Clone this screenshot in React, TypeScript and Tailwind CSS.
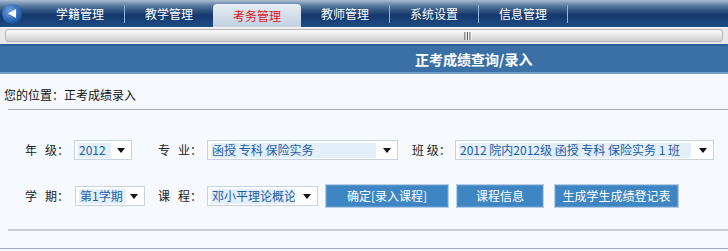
import { ReactNode } from "react";

const tabs = ["学籍管理", "教学管理", "考务管理", "教师管理", "系统设置", "信息管理"];

function Arrow() {
  return (
    <svg width="8" height="5" viewBox="0 0 8 5" className="shrink-0">
      <path d="M0 0h8L4 5z" fill="#111" />
    </svg>
  );
}

function Select({ w, hw, children }: { w: string; hw: string; children: ReactNode }) {
  return (
    <div className={`${w} h-[20px] flex items-center justify-between border border-[#c9d3dd] bg-white pl-[3px] pr-[6px]`}>
      <span className={`${hw} h-[15px] flex items-center bg-[#e3f0fb] px-[1px] text-[#1d5aa6] whitespace-nowrap overflow-hidden`}>
        {children}
      </span>
      <Arrow />
    </div>
  );
}

function Label({ children, w }: { children: ReactNode; w: string }) {
  return <span className={`${w} text-[#222] whitespace-pre`}>{children}</span>;
}

function Btn({ w, children }: { w: string; children: ReactNode }) {
  return (
    <div className={`${w} h-[24px] flex items-center justify-center border border-[#b5cde3] bg-[#3e85c3] text-white shadow-[inset_0_0_0_1px_#5b95c9]`}>
      {children}
    </div>
  );
}

export default function App() {
  return (
    <div
      className="w-[728px] h-[251px] bg-[#f6f9fd] text-[12px] overflow-hidden"
      style={{ fontFamily: '"Noto Sans CJK SC", "DejaVu Sans", sans-serif' }}
    >
      {/* Top navigation */}
      <div className="h-[27px] flex items-end bg-[linear-gradient(#a9bccf_0%,#4d6f98_25%,#14386c_55%,#1e4c85_100%)]">
        <div className="w-[26px] h-full flex items-center pl-[2px]">
          <div className="w-[20px] h-[20px] rounded-full bg-[radial-gradient(circle_at_40%_35%,#6fa3e0,#1d56a8_70%,#103a78)] flex items-center justify-center">
            <svg width="8" height="9" viewBox="0 0 8 9">
              <path d="M0 4.5L8 0v9z" fill="#fff" />
            </svg>
          </div>
        </div>
        <div className="w-[10px]" />
        {tabs.map((t, i) => (
          <div key={t} className="flex items-end h-full">
            {i === 2 ? (
              <div className="w-[88px] h-[23px] rounded-t-[4px] bg-[linear-gradient(#e6edf4,#bfd0df)] flex items-center justify-center text-[#e3141c]">
                {t}
              </div>
            ) : (
              <div className="w-[88px] h-full flex items-center justify-center text-white">{t}</div>
            )}
            {i !== 1 && i !== 2 && <div className="w-px h-[18px] mb-[4px] bg-[#8fb6e0]" />}
          </div>
        ))}
      </div>

      {/* Grip bar */}
      <div className="h-[17px] bg-[#e9e9e9] border-t border-[#f8f8f8] px-[5px] pt-[1px] pb-[2px]">
        <div className="h-full rounded-[3px] border border-[#b9b9b9] bg-[linear-gradient(#fbfbfb,#e2e2e2_60%,#cfcfcf)] flex items-center pl-[458px]">
          <svg width="8" height="8" viewBox="0 0 8 8">
            <path d="M1 0v8M3.5 0v8M6 0v8" stroke="#5c5c5c" strokeWidth="1.2" />
            <path d="M2 0v8M4.5 0v8M7 0v8" stroke="#fff" strokeWidth="0.8" />
          </svg>
        </div>
      </div>

      {/* Title bar */}
      <div className="h-[30px] border-t-2 border-[#2d5e94] bg-[#3a70a6] border-b-2 border-b-[#73a0cb] flex items-center pl-[415px]">
        <span className="text-white font-bold text-[14px]">正考成绩查询/录入</span>
      </div>

      <div className="pt-[12px] pl-[4px] text-[#111]">您的位置：正考成绩录入</div>
      <div className="ml-[8px] mt-[5px] h-px bg-[#a9a9a9]" />

      {/* Row 1 */}
      <div className="mt-[30px] flex items-center pl-[25px]">
        <Label w="w-[49px]">{"年   级："}</Label>
        <Select w="w-[58px]" hw="w-[33px]">2012</Select>
        <div className="w-[26px]" />
        <Label w="w-[49px]">{"专   业："}</Label>
        <Select w="w-[191px]" hw="w-[165px]">函授 专科 保险实务</Select>
        <div className="w-[14px]" />
        <Label w="w-[43px]">{"班 级："}</Label>
        <Select w="w-[259px]" hw="w-[232px]">2012 院内2012级 函授 专科 保险实务 1 班</Select>
      </div>

      {/* Row 2 */}
      <div className="mt-[24px] flex items-center pl-[25px]">
        <Label w="w-[50px]">{"学   期："}</Label>
        <Select w="w-[70px]" hw="w-[47px]">第1学期</Select>
        <div className="w-[13px]" />
        <Label w="w-[49px]">{"课   程："}</Label>
        <Select w="w-[111px]" hw="w-[84px]">邓小平理论概论</Select>
        <div className="w-[7px]" />
        <Btn w="w-[124px]">确定[录入课程]</Btn>
        <div className="w-[7px]" />
        <Btn w="w-[88px]">课程信息</Btn>
        <div className="w-[10px]" />
        <Btn w="w-[125px]">生成学生成绩登记表</Btn>
      </div>

      <div className="ml-[8px] mt-[21px] h-[2px] bg-[#cbcdd0]" />
      <div className="mt-[17px] h-px bg-[#9ea9d6]" />
    </div>
  );
}
